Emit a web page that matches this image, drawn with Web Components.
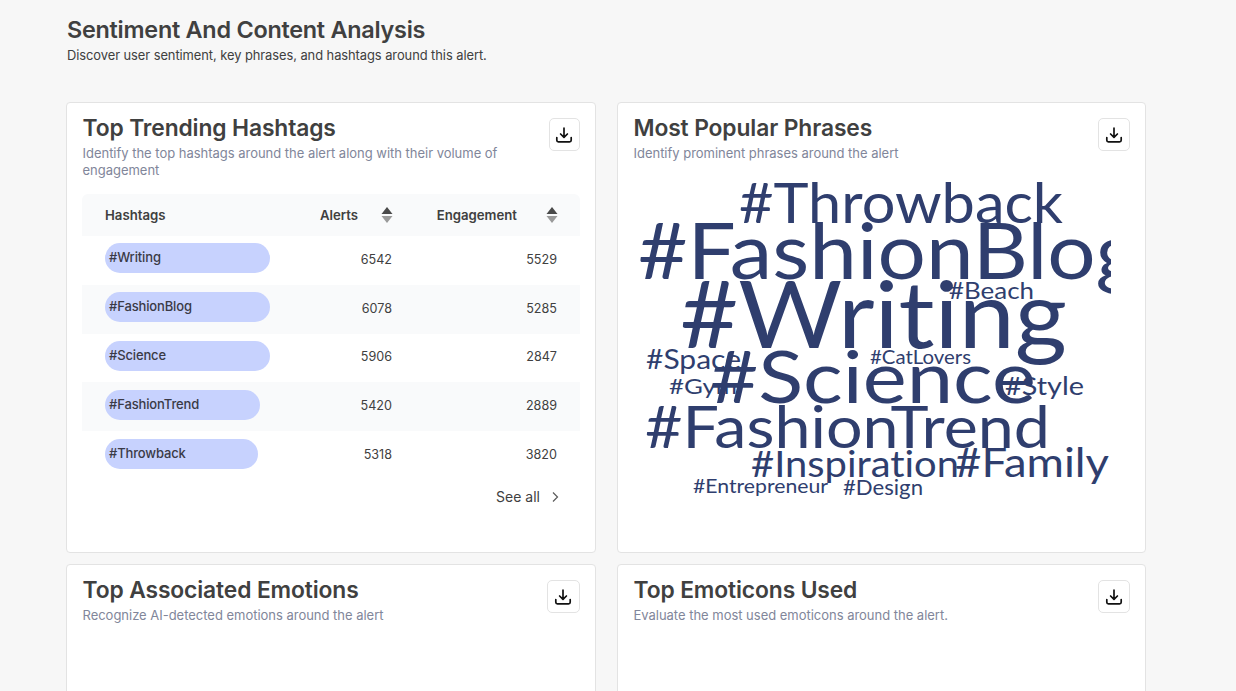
<!DOCTYPE html>
<html lang="en"><head><meta charset="utf-8"><title>Sentiment And Content Analysis</title>
<style>
html,body{margin:0;height:691px;overflow:hidden;background:#f7f7f7;font-family:Inter,"Liberation Sans",sans-serif}
</style></head><body>
<x-page>
  <x-card slot="a" heading="Top Trending Hashtags" sub="Identify the top hashtags around the alert along with their volume of engagement" btn="31"><x-hashtags></x-hashtags></x-card>
  <x-card slot="b" heading="Most Popular Phrases" sub="Identify prominent phrases around the alert" btn="32"><x-cloud></x-cloud></x-card>
  <x-card slot="c" heading="Top Associated Emotions" sub="Recognize AI-detected emotions around the alert" btn="33"></x-card>
  <x-card slot="d" heading="Top Emoticons Used" sub="Evaluate the most used emoticons around the alert." btn="32"></x-card>
</x-page>
<script>
const mk=(name,html)=>customElements.define(name,class extends HTMLElement{
  connectedCallback(){ if(this.shadowRoot) return; const s=this.attachShadow({mode:'open'}); s.innerHTML=typeof html==='function'?html(this):html; }
});
mk('x-page',`<style>
:host{display:block;padding:17px 0 0 66px;width:1080px;height:674px;overflow:hidden}
h1{margin:0 0 0 1px;font-size:23.4px;line-height:26px;font-weight:600;color:#404040;letter-spacing:-.25px}
p{margin:5px 0 0 1px;font-size:12.9px;line-height:16px;color:#404040;letter-spacing:-.06px}
.grid{display:grid;grid-template-columns:530px 529px;column-gap:21px;row-gap:11px;grid-template-rows:451px 200px;margin-top:38px}
</style><h1>Sentiment And Content Analysis</h1><p>Discover user sentiment, key phrases, and hashtags around this alert.</p>
<div class="grid"><slot name="a"></slot><slot name="b"></slot><slot name="c"></slot><slot name="d"></slot></div>`);
mk('x-card',h=>`<style>
:host{display:block;box-sizing:border-box;background:#fff;border:1px solid #e3e3e3;border-radius:4px;padding:15px 15px 0 15px;min-width:0;overflow:hidden}
.top{display:flex;justify-content:space-between;align-items:flex-start;gap:20px}
h2{margin:-2px 0 0 .5px;font-size:22.8px;line-height:24px;font-weight:600;color:#404040;letter-spacing:-.11px}
p{margin:5px 0 0 .5px;font-size:13px;line-height:17px;color:#81869a;letter-spacing:-.02px}
button{flex:none;width:${h.getAttribute('btn')}px;height:33px;padding:0;background:#fff;border:1px solid #e3e3e3;border-radius:5px;display:flex;align-items:center;justify-content:center}
svg{width:18px;height:18px;display:block;margin-left:-1px}
</style><div class="top"><div><h2>${h.getAttribute('heading')}</h2><p>${h.getAttribute('sub')}</p></div>
<button aria-label="Download"><svg viewBox="0 0 18 18" fill="none" stroke="#111" stroke-width="1.7" stroke-linecap="round" stroke-linejoin="round"><path d="M9 2.2v9M5.6 8 9 11.4 12.4 8"/><path d="M1.8 11.5v2.7a1.6 1.6 0 0 0 1.6 1.6h11.2a1.6 1.6 0 0 0 1.6-1.6v-2.7"/></svg></button></div><slot></slot>`);
const rows=[['#Writing',165,6542,5529],['#FashionBlog',165,6078,5285],['#Science',165,5906,2847],['#FashionTrend',155,5420,2889],['#Throwback',153,5318,3820]];
const sort=m=>`<svg style="margin-left:${m}px" width="12" height="16" viewBox="0 0 12 16"><path d="M6 0 11.5 7H.5z" fill="#4a4a4a"/><path d="M.5 9h11L6 16z" fill="#9a9a9a"/></svg>`;
mk('x-hashtags',`<style>
:host{display:block;margin-top:15px;font-size:13px;color:#404040}
.r{display:grid;grid-template-columns:minmax(0,1fr) 145px 165px;padding:0 23px 4px;height:48.8px;align-items:center;box-sizing:border-box}
.r:nth-child(even){background:#f9fafb}
.h{height:42px;padding:0 22px 1px 23px;background:#f9fafb;border-radius:6px 6px 0 0;font-weight:600;font-size:13.2px}
.h>div{display:flex;align-items:center}
.h .n{justify-content:flex-end}
.pill{box-sizing:border-box;height:30px;border-radius:15px;background:#c7d2fe;padding:0 4px 2px;display:flex;align-items:center;font-weight:500;font-size:13px;letter-spacing:-.14px;color:#3a3a46}
.v{text-align:right;font-size:12.6px;padding-top:2px}
.more{display:flex;justify-content:flex-end;align-items:center;margin-top:4px;padding-right:20px;height:26px;font-size:14px;color:#404040}
.more svg{margin-left:10px}
</style><div class="r h"><div>Hashtags</div><div class="n">Alerts${sort(23)}</div><div class="n">Engagement${sort(29)}</div></div>
${rows.map(r=>`<div class="r"><div><div class="pill" style="width:${r[1]}px">${r[0]}</div></div><div class="v">${r[2]}</div><div class="v">${r[3]}</div></div>`).join('')}
<div class="more">See all<svg width="10" height="12" viewBox="0 0 10 12" fill="none" stroke="#5a5a5a" stroke-width="1.2"><path d="M3 1.5 7.5 6 3 10.5"/></svg></div>`);
const words=[
['#Throwback',56,739,222,324],['#FashionBlog',77,638,278,502],['#Writing',93,680,347,387],['#Science',72,710,402,326],
['#FashionTrend',58,645,447,405],['#Inspiration',37,751,476,208],['#Family',40,955,476,154],['#Beach',24,949,298,85],
['#Space',27,646,368,95],['#CatLovers',19,870,363,101],['#Gym',22,669,393,68],['#Style',25,1005,394,79],
['#Entrepreneur',20,693,492,135],['#Design',21,843,494,80]];
mk('x-cloud',`<style>
:host{display:block;margin-top:9px;height:330px;width:478px;overflow:hidden}
svg{display:block}
text{font-family:Lato,Inter,"Liberation Sans",sans-serif;fill:#2f3e6e;font-variant-ligatures:none}
</style><svg width="478" height="330" viewBox="633 170 478 330">${words.map(w=>`<text x="${w[2]}" y="${w[3]}" font-size="${w[1]}" textLength="${w[4]}" lengthAdjust="spacingAndGlyphs">${w[0]}</text>`).join('')}</svg>`);
</script>
</body></html>
